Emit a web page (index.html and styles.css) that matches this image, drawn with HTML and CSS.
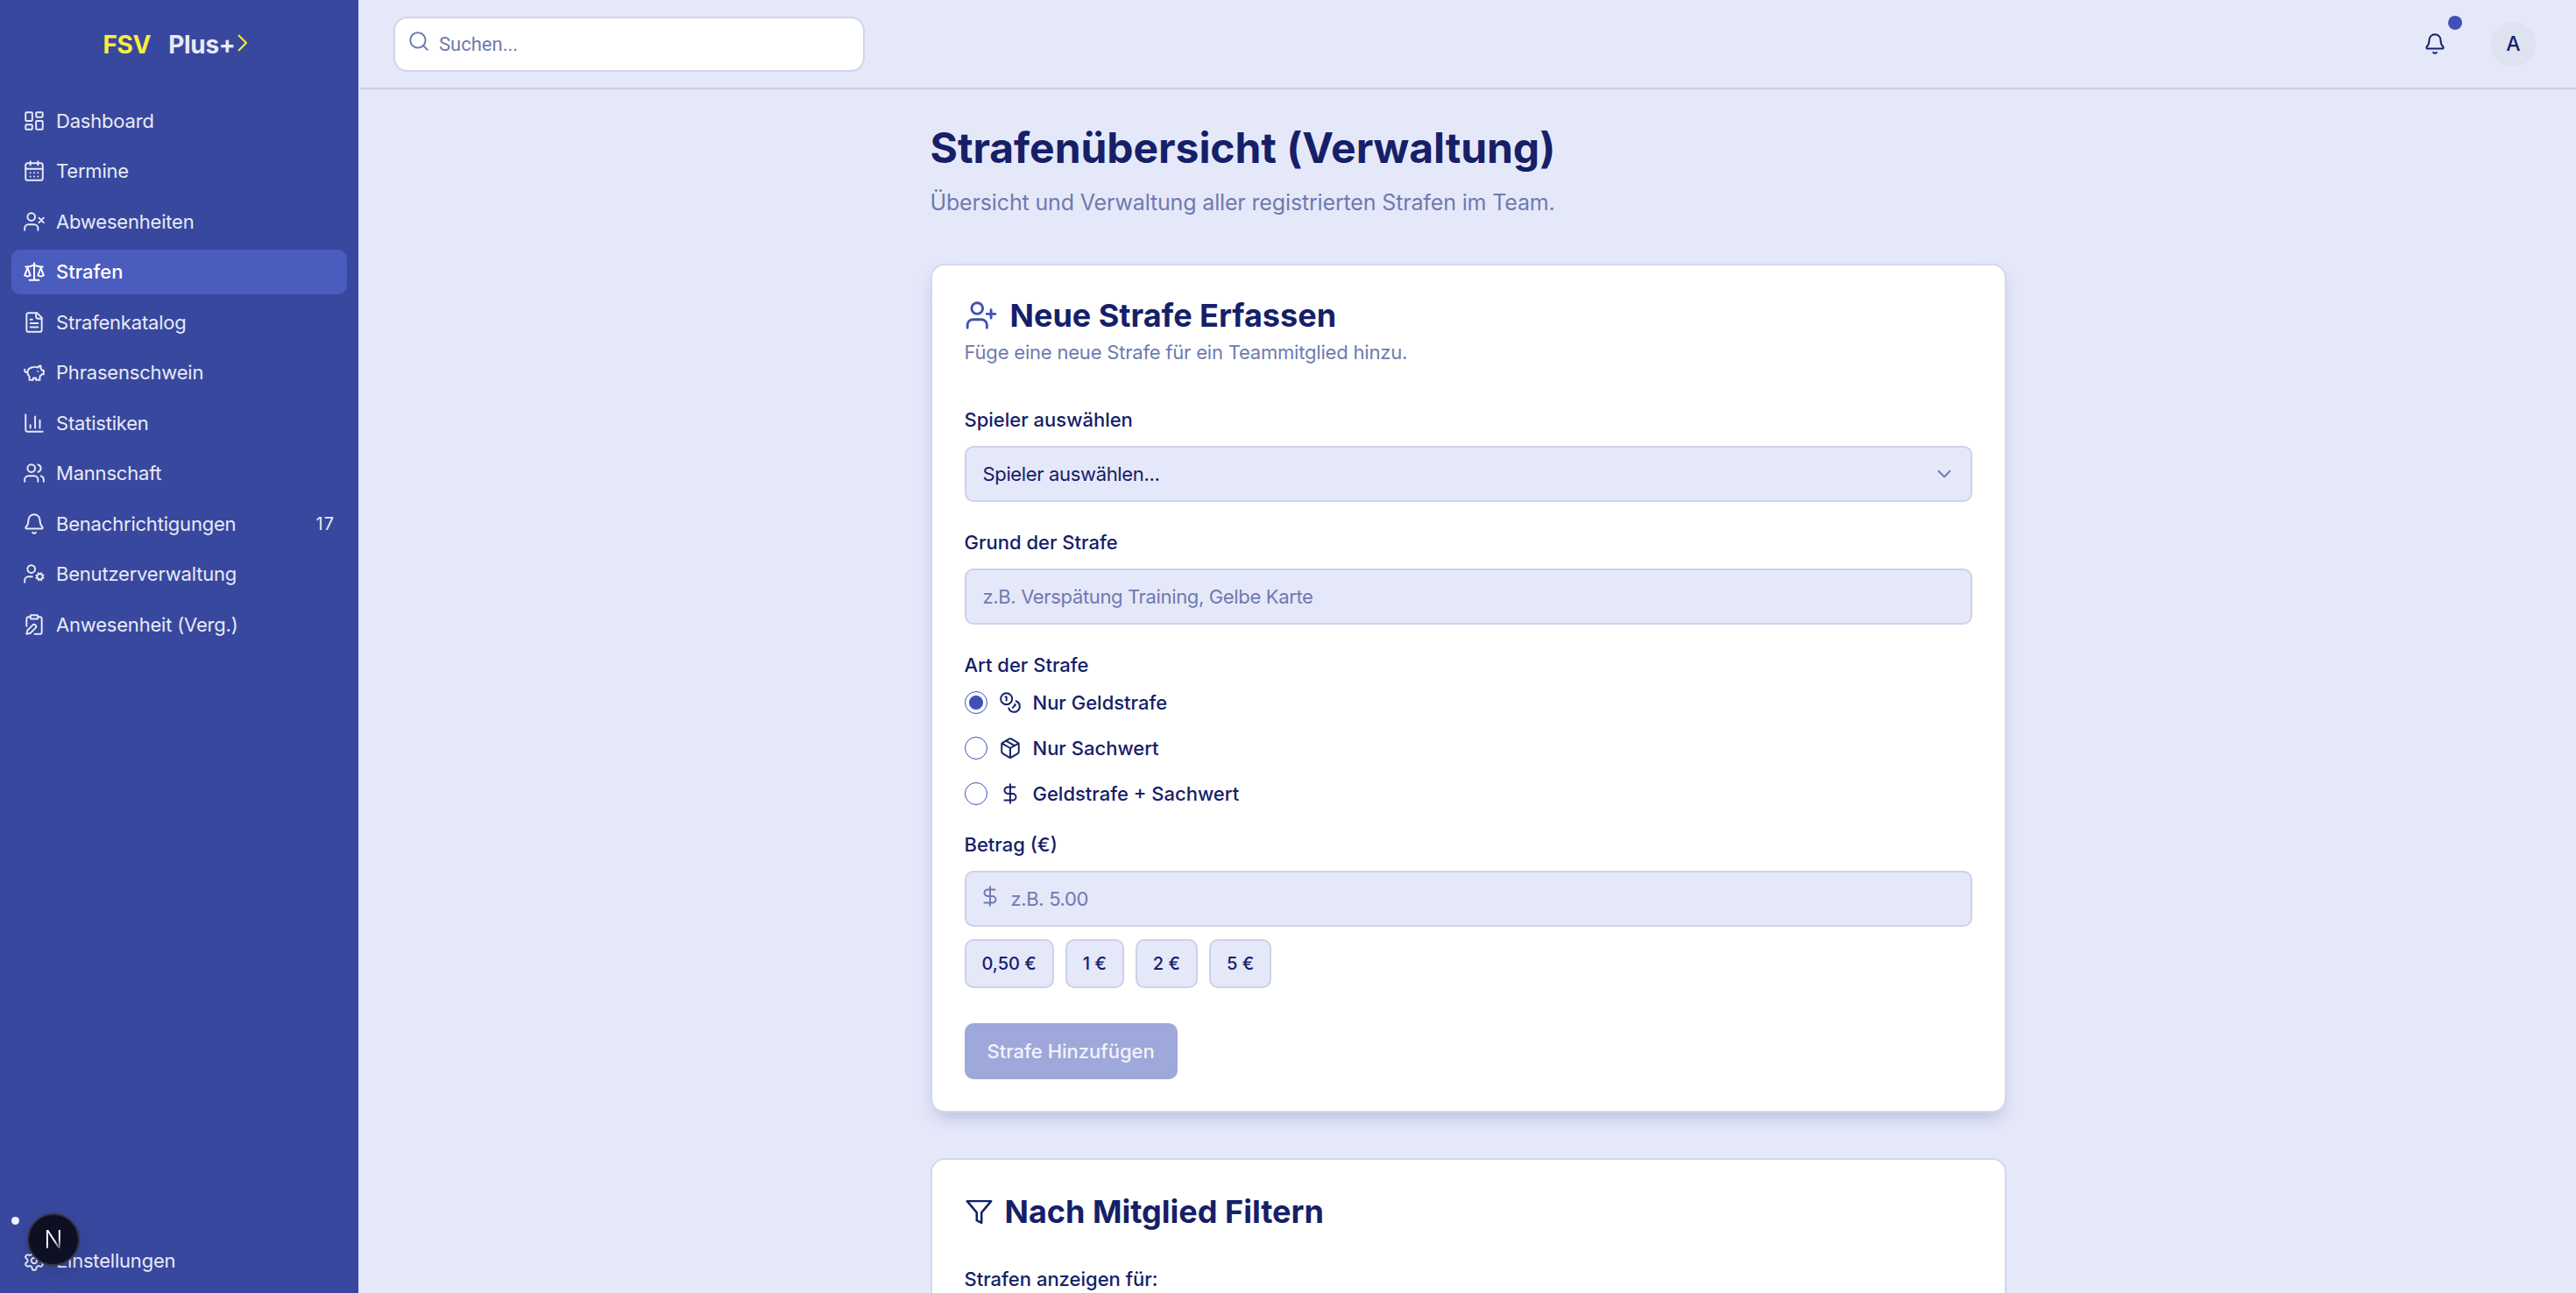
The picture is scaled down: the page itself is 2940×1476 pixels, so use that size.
FILE: index.html
```html
<!DOCTYPE html>
<html lang="de">
<head>
    <meta charset="UTF-8">
    <meta name="viewport" content="width=device-width, initial-scale=1.0">
    <title>Strafenübersicht</title>
    <link rel="stylesheet" href="styles.css">
</head>
<body>
<div class="app">
    <aside class="sidebar">
        <div class="logo">
            <span class="logo-fsv">FSV</span>
            <span class="logo-plus">Plus+</span>
            <svg class="logo-arrow" viewBox="0 0 11 20"><path d="M1 1l9 9-9 9"/></svg>
        </div>
        <nav class="nav">
            <a class="nav-item"><svg class="icon" viewBox="0 0 24 24"><rect x="3" y="3" width="7" height="9" rx="1"/><rect x="14" y="3" width="7" height="5" rx="1"/><rect x="14" y="12" width="7" height="9" rx="1"/><rect x="3" y="16" width="7" height="5" rx="1"/></svg>Dashboard</a>
            <a class="nav-item"><svg class="icon" viewBox="0 0 24 24"><path d="M8 2v4M16 2v4"/><rect x="3" y="4" width="18" height="18" rx="2"/><path d="M3 10h18M8 14h.01M12 14h.01M16 14h.01M8 18h.01M12 18h.01M16 18h.01"/></svg>Termine</a>
            <a class="nav-item"><svg class="icon" viewBox="0 0 24 24"><path d="M16 21v-2a4 4 0 0 0-4-4H6a4 4 0 0 0-4 4v2"/><circle cx="9" cy="7" r="4"/><path d="M17 8l5 5M22 8l-5 5"/></svg>Abwesenheiten</a>
            <a class="nav-item active"><svg class="icon" viewBox="0 0 24 24"><path d="M16 16l3-8 3 8c-.87.65-1.92 1-3 1s-2.13-.35-3-1Z"/><path d="M2 16l3-8 3 8c-.87.65-1.92 1-3 1s-2.13-.35-3-1Z"/><path d="M7 21h10M12 3v18M3 7h2c2 0 5-1 7-2 2 1 5 2 7 2h2"/></svg>Strafen</a>
            <a class="nav-item"><svg class="icon" viewBox="0 0 24 24"><path d="M15 2H6a2 2 0 0 0-2 2v16a2 2 0 0 0 2 2h12a2 2 0 0 0 2-2V7Z"/><path d="M14 2v4a2 2 0 0 0 2 2h4M10 9H8M16 13H8M16 17H8"/></svg>Strafenkatalog</a>
            <a class="nav-item"><svg class="icon" viewBox="0 0 24 24"><path d="M19 5c-1.5 0-2.8 1.4-3 2-3.5-1.5-11-.3-11 5 0 1.8 0 3 2 4.5V20h4v-2h3v2h4v-4c1-.5 1.7-1 2-2h2v-4h-2c0-1-.5-1.5-1-2V5z"/><path d="M2 9v1c0 1.1.9 2 2 2h1M16 11h.01"/></svg>Phrasenschwein</a>
            <a class="nav-item"><svg class="icon" viewBox="0 0 24 24"><path d="M3 3v16a2 2 0 0 0 2 2h16M18 17V9M13 17V5M8 17v-3"/></svg>Statistiken</a>
            <a class="nav-item"><svg class="icon" viewBox="0 0 24 24"><path d="M16 21v-2a4 4 0 0 0-4-4H6a4 4 0 0 0-4 4v2"/><circle cx="9" cy="7" r="4"/><path d="M22 21v-2a4 4 0 0 0-3-3.87M16 3.13a4 4 0 0 1 0 7.75"/></svg>Mannschaft</a>
            <a class="nav-item"><svg class="icon" viewBox="0 0 24 24"><path d="M10.268 21a2 2 0 0 0 3.464 0"/><path d="M3.262 15.326A1 1 0 0 0 4 17h16a1 1 0 0 0 .74-1.673C19.41 13.956 18 12.499 18 8A6 6 0 0 0 6 8c0 4.499-1.411 5.956-2.738 7.326"/></svg>Benachrichtigungen<span class="nav-count">17</span></a>
            <a class="nav-item"><svg class="icon" viewBox="0 0 24 24"><circle cx="18" cy="15" r="3"/><circle cx="9" cy="7" r="4"/><path d="M10 15H6a4 4 0 0 0-4 4v2M21.7 16.4l-.9-.3M15.2 13.9l-.9-.3M16.6 18.7l.3-.9M19.1 12.2l.3-.9M19.6 18.7l-.4-1M16.8 12.3l-.4-1M14.3 16.6l1-.4M20.7 13.8l1-.4"/></svg>Benutzerverwaltung</a>
            <a class="nav-item"><svg class="icon" viewBox="0 0 24 24"><rect x="8" y="2" width="8" height="4" rx="1"/><path d="M10.4 12.6a2 2 0 0 1 3 3L8 21l-4 1 1-4Z"/><path d="M16 4h2a2 2 0 0 1 2 2v14a2 2 0 0 1-2 2h-5.5M4 13.5V6a2 2 0 0 1 2-2h2"/></svg>Anwesenheit (Verg.)</a>
        </nav>
        <div class="sidebar-foot">
            <a class="nav-item"><svg class="icon" viewBox="0 0 24 24"><path d="M12.22 2h-.44a2 2 0 0 0-2 2v.18a2 2 0 0 1-1 1.73l-.43.25a2 2 0 0 1-2 0l-.15-.08a2 2 0 0 0-2.73.73l-.22.38a2 2 0 0 0 .73 2.73l.15.1a2 2 0 0 1 1 1.72v.51a2 2 0 0 1-1 1.74l-.15.09a2 2 0 0 0-.73 2.73l.22.38a2 2 0 0 0 2.73.73l.15-.08a2 2 0 0 1 2 0l.43.25a2 2 0 0 1 1 1.73V20a2 2 0 0 0 2 2h.44a2 2 0 0 0 2-2v-.18a2 2 0 0 1 1-1.73l.43-.25a2 2 0 0 1 2 0l.15.08a2 2 0 0 0 2.73-.73l.22-.39a2 2 0 0 0-.73-2.73l-.15-.08a2 2 0 0 1-1-1.74v-.5a2 2 0 0 1 1-1.74l.15-.09a2 2 0 0 0 .73-2.73l-.22-.38a2 2 0 0 0-2.73-.73l-.15.08a2 2 0 0 1-2 0l-.43-.25a2 2 0 0 1-1-1.73V4a2 2 0 0 0-2-2z"/><circle cx="12" cy="12" r="3"/></svg>Einstellungen</a>
        </div>
        <span class="dev-dot"></span>
        <div class="dev-badge"><span class="dev-n">N</span></div>
    </aside>

    <div class="main">
        <header class="topbar">
            <div class="search">
                <svg class="icon search-icon" viewBox="0 0 24 24"><circle cx="11" cy="11" r="8"/><path d="M21 21l-4.3-4.3"/></svg>
                <input class="search-input" type="text" placeholder="Suchen...">
            </div>
            <div class="topbar-right">
                <div class="bell">
                    <svg class="icon" viewBox="0 0 24 24"><path d="M10.268 21a2 2 0 0 0 3.464 0"/><path d="M3.262 15.326A1 1 0 0 0 4 17h16a1 1 0 0 0 .74-1.673C19.41 13.956 18 12.499 18 8A6 6 0 0 0 6 8c0 4.499-1.411 5.956-2.738 7.326"/></svg>
                    <span class="bell-dot"></span>
                </div>
                <div class="avatar">A</div>
            </div>
        </header>

        <main class="content">
            <h1 class="page-title">Strafenübersicht (Verwaltung)</h1>
            <p class="page-sub">Übersicht und Verwaltung aller registrierten Strafen im Team.</p>

            <section class="card card-form">
                <h2 class="card-title">
                    <svg class="icon title-icon" viewBox="0 0 24 24"><path d="M16 21v-2a4 4 0 0 0-4-4H6a4 4 0 0 0-4 4v2"/><circle cx="9" cy="7" r="4"/><path d="M19 8v6M22 11h-6"/></svg>
                    Neue Strafe Erfassen
                </h2>
                <p class="card-sub">Füge eine neue Strafe für ein Teammitglied hinzu.</p>

                <label class="field-label label-player" for="player">Spieler auswählen</label>
                <div class="select-wrap">
                    <select class="control" id="player">
                        <option>Spieler auswählen...</option>
                    </select>
                    <svg class="icon select-arrow" viewBox="0 0 24 24"><path d="M6 9l6 6 6-6"/></svg>
                </div>

                <label class="field-label" for="reason">Grund der Strafe</label>
                <input class="control" id="reason" type="text" placeholder="z.B. Verspätung Training, Gelbe Karte">

                <div class="field-label">Art der Strafe</div>
                <div class="radio-group">
                    <label class="radio-row">
                        <input type="radio" name="art" checked>
                        <svg class="icon" viewBox="0 0 24 24"><circle cx="8" cy="8" r="6"/><path d="M18.09 10.37A6 6 0 1 1 10.34 18M7 6h1v4M16.71 13.88l.7.71-2.82 2.82"/></svg>
                        Nur Geldstrafe
                    </label>
                    <label class="radio-row">
                        <input type="radio" name="art">
                        <svg class="icon" viewBox="0 0 24 24"><path d="M11 21.73a2 2 0 0 0 2 0l7-4A2 2 0 0 0 21 16V8a2 2 0 0 0-1-1.73l-7-4a2 2 0 0 0-2 0l-7 4A2 2 0 0 0 3 8v8a2 2 0 0 0 1 1.73z"/><path d="M12 22V12M3.29 7L12 12l8.71-5M7.5 4.27l9 5.15"/></svg>
                        Nur Sachwert
                    </label>
                    <label class="radio-row">
                        <input type="radio" name="art">
                        <svg class="icon" viewBox="0 0 24 24"><path d="M12 2v20M17 5H9.5a3.5 3.5 0 0 0 0 7h5a3.5 3.5 0 0 1 0 7H6"/></svg>
                        Geldstrafe + Sachwert
                    </label>
                </div>

                <label class="field-label label-amount" for="amount">Betrag (€)</label>
                <div class="amount-wrap">
                    <svg class="icon amount-icon" viewBox="0 0 24 24"><path d="M12 2v20M17 5H9.5a3.5 3.5 0 0 0 0 7h5a3.5 3.5 0 0 1 0 7H6"/></svg>
                    <input class="control amount-input" id="amount" type="text" placeholder="z.B. 5.00">
                </div>
                <div class="chips">
                    <button class="chip" type="button">0,50 €</button>
                    <button class="chip" type="button">1 €</button>
                    <button class="chip" type="button">2 €</button>
                    <button class="chip" type="button">5 €</button>
                </div>
                <button class="submit" type="button">Strafe Hinzufügen</button>
            </section>

            <section class="card card-filter">
                <h2 class="card-title filter-title">
                    <svg class="icon filter-icon" viewBox="0 0 24 24"><path d="M22 3H2l8 9.46V19l4 2v-8.54z"/></svg>
                    Nach Mitglied Filtern
                </h2>
                <div class="field-label filter-label">Strafen anzeigen für:</div>
            </section>
        </main>
    </div>
</div>
</body>
</html>
```

FILE: styles.css
```css
* {
    box-sizing: border-box;
}
html, body {
    margin: 0;
    height: 100%;
    overflow: hidden;
}
body {
    font-family: Inter, "Liberation Sans", sans-serif;
    background-color: #e5e8f9;
    color: #152068;
}
.app {
    display: flex;
    height: 100vh;
}
.icon {
    width: 26px;
    height: 26px;
    flex-shrink: 0;
    fill: none;
    stroke: currentColor;
    stroke-width: 1.8;
    stroke-linecap: round;
    stroke-linejoin: round;
}

/* sidebar */
.sidebar {
    position: relative;
    width: 411px;
    flex-shrink: 0;
    display: flex;
    flex-direction: column;
    background-color: #38489e;
    border-right: 2px solid #dfe3f6;
    color: #e8eaf6;
    padding: 0 13px;
}
.logo {
    height: 112px;
    padding: 0 10px 10px 0;
    display: flex;
    align-items: center;
    justify-content: center;
    font-size: 28px;
    letter-spacing: -0.3px;
    font-weight: 700;
}
.logo-fsv {
    color: #ffeb3b;
    margin-right: 20px;
}
.logo-plus {
    color: #e8eaf6;
}
.logo-arrow {
    width: 11px;
    height: 20px;
    margin: -4px 0 0 2px;
    fill: none;
    stroke: #ffeb3b;
    stroke-width: 2;
}
.nav {
    display: flex;
    flex-direction: column;
    gap: 6.5px;
}
.nav-item {
    height: 51px;
    display: flex;
    align-items: center;
    gap: 12px;
    padding: 0 14px 0 13px;
    border-radius: 10px;
    font-size: 22px;
    letter-spacing: -0.2px;
}
.nav-item.active {
    background-color: #4a5cbe;
    color: #fff;
    font-weight: 500;
    letter-spacing: 0;
}
.nav-count {
    margin-left: auto;
    font-size: 20px;
    letter-spacing: 1px;
}
.sidebar-foot {
    margin-top: auto;
    padding-bottom: 12px;
}
.dev-dot {
    position: absolute;
    left: 13px;
    top: 1389px;
    width: 9px;
    height: 9px;
    border-radius: 50%;
    background-color: #f4f5fb;
}
.dev-badge {
    position: absolute;
    left: 31px;
    top: 1385px;
    width: 60px;
    height: 60px;
    border-radius: 50%;
    border: 2px solid #33343f;
    background-color: #0d0f22;
    display: flex;
    align-items: center;
    justify-content: center;
    box-shadow: 0 8px 24px rgba(0, 0, 0, 0.12);
}
.dev-n {
    font-size: 28px;
    font-weight: 300;
    background: linear-gradient(150deg, #fff 55%, #333 85%);
    -webkit-background-clip: text;
    background-clip: text;
    color: transparent;
}

/* top bar */
.main {
    flex: 1;
    min-width: 0;
    display: flex;
    flex-direction: column;
}
.topbar {
    height: 102px;
    flex-shrink: 0;
    display: flex;
    align-items: center;
    justify-content: space-between;
    padding: 0 46px 0 38px;
    border-bottom: 2px solid #c9cde4;
}
.search {
    position: relative;
    width: 538px;
}
.search-icon {
    position: absolute;
    left: 16px;
    top: 15px;
    color: #6f7aaf;
}
.search-input {
    width: 100%;
    height: 63px;
    padding: 0 16px 0 50px;
    border: 2px solid #d0d4ea;
    border-radius: 16px;
    background-color: #fff;
    font-family: Roboto, sans-serif;
    font-size: 22px;
    outline: none;
}
.search-input::placeholder {
    color: #6f7aaf;
}
.topbar-right {
    display: flex;
    align-items: center;
    gap: 51px;
}
.bell {
    position: relative;
    display: flex;
}
.bell-dot {
    position: absolute;
    left: 28px;
    top: -19px;
    width: 16px;
    height: 16px;
    border-radius: 50%;
    background-color: #3f51b5;
}
.avatar {
    width: 51px;
    height: 51px;
    border-radius: 50%;
    background-color: #dfe3f0;
    display: flex;
    align-items: center;
    justify-content: center;
    font-size: 23px;
    font-weight: 500;
}

/* content */
.content {
    width: 1228px;
    margin: 0 auto;
    padding-top: 38px;
}
.page-title {
    margin: 0;
    font-size: 48px;
    letter-spacing: -0.05px;
    line-height: 58px;
    font-weight: 700;
}
.page-sub {
    margin: 16px 0 0;
    font-size: 25px;
    letter-spacing: -0.15px;
    line-height: 34px;
    color: #6f7aaf;
}
.card {
    margin-top: 52px;
    padding: 37px;
    background-color: #fff;
    border: 2px solid #d3d7ee;
    border-radius: 16px;
}
.card-form {
    height: 969px;
    margin-top: 53px;
    box-shadow: 0 10px 20px -6px rgba(26, 35, 126, 0.25);
}
.card-filter {
    padding-top: 39px;
}
.card-title {
    margin: 0;
    display: flex;
    align-items: center;
    gap: 14px;
    font-size: 36px;
    line-height: 40px;
    font-weight: 700;
}
.filter-title {
    gap: 13px;
}
.title-icon {
    width: 38px;
    height: 38px;
    color: #3f51b5;
}
.filter-icon {
    width: 33px;
    height: 33px;
}
.card-sub {
    margin: 6px 0 0;
    font-size: 22px;
    letter-spacing: -0.2px;
    line-height: 32px;
    color: #6f7aaf;
}
.field-label {
    display: block;
    margin: 31px 0 15px;
    font-size: 22px;
    line-height: 30px;
    font-weight: 500;
}
.label-player {
    margin-top: 46px;
}
.filter-label {
    margin-top: 42px;
}
.control {
    display: block;
    width: 100%;
    height: 64px;
    padding: 0 19px;
    border: 2px solid #cdd1ea;
    border-radius: 10px;
    background-color: #e5e8f9;
    font-family: Inter, sans-serif;
    font-size: 22px;
    letter-spacing: -0.35px;
    color: #152068;
    outline: none;
    appearance: none;
}
.control::placeholder {
    color: #6f7aaf;
}
.select-wrap {
    position: relative;
}
.select-arrow {
    position: absolute;
    right: 19px;
    top: 19px;
    color: #6f7aaf;
}
.radio-group {
    display: flex;
    flex-direction: column;
    gap: 26px;
}
.radio-row {
    display: flex;
    align-items: center;
    height: 26px;
    font-size: 22px;
    font-weight: 500;
}
.radio-row input {
    appearance: none;
    width: 26px;
    height: 26px;
    margin: 0 13px 0 0;
    border: 1px solid #3f51b5;
    border-radius: 50%;
    background-color: #fff;
}
.radio-row input:checked {
    background: radial-gradient(circle, #3f51b5 0 7.5px, #fff 8.5px);
}
.radio-row .icon {
    margin-right: 13px;
}
.label-amount {
    margin-top: 30px;
}
.amount-wrap {
    position: relative;
}
.amount-icon {
    position: absolute;
    left: 16px;
    top: 16px;
    color: #6f7aaf;
}
.amount-input {
    padding-left: 51px;
}
.chips {
    display: flex;
    gap: 13px;
    margin-top: 14px;
}
.chip {
    height: 56px;
    padding: 0 18px;
    border: 2px solid #cdd1ea;
    border-radius: 10px;
    background-color: #e5e8f9;
    font-family: Inter, sans-serif;
    font-size: 20px;
    font-weight: 500;
    color: #152068;
}
.submit {
    display: block;
    margin-top: 40px;
    height: 64px;
    padding: 0 26px;
    border: none;
    border-radius: 10px;
    background-color: #9fa8da;
    color: #f2f3fb;
    font-family: Inter, sans-serif;
    font-size: 22px;
    font-weight: 500;
}
```
